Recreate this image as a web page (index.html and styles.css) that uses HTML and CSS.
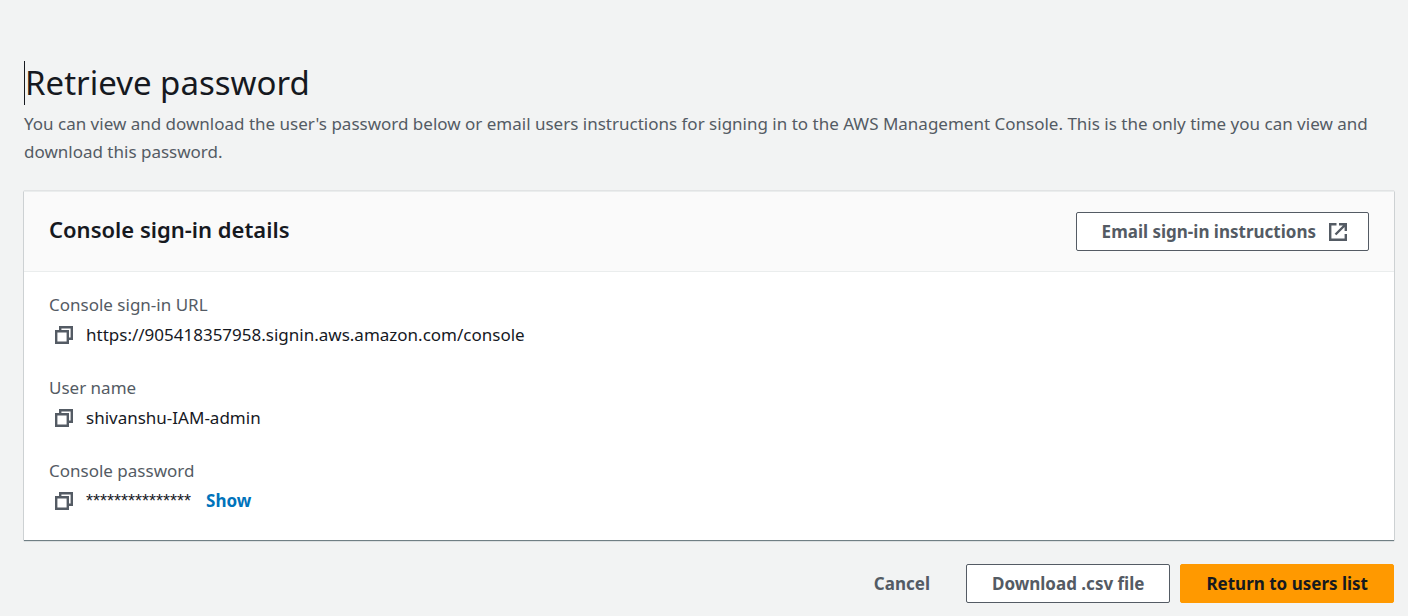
FILE: index.html
```html
<!DOCTYPE html>
<html lang="en">
<head>
<meta charset="utf-8">
<title>Retrieve password</title>
<link rel="stylesheet" href="styles.css">
</head>
<body>
<main class="page">
  <header class="intro">
    <h1 class="title">Retrieve password</h1>
    <p class="lead">You can view and download the user's password below or email users instructions for signing in to the AWS Management Console. This is the only time you can view and download this password.</p>
  </header>
  <section class="card">
    <div class="card-head">
      <h2 class="card-title">Console sign-in details</h2>
      <button class="btn btn-icon" type="button">Email sign-in instructions
        <svg class="icon" viewBox="0 0 20 20" aria-hidden="true"><path d="M8.5 2.2H2.2v15.6h15.6V12M11 2.2h6.8V9M17.5 2.5 7.5 12.5"/></svg>
      </button>
    </div>
    <dl class="details">
      <div class="field">
        <dt class="label">Console sign-in URL</dt>
        <dd class="value"><button class="copy" type="button" aria-label="Copy sign-in URL"><svg class="icon" viewBox="0 0 20 20" aria-hidden="true"><path d="M2.2 6.2h11.6v11.6H2.2zM6.2 5.8V2.2h11.6v11.6h-3.6"/></svg></button><span>https://905418357958.signin.aws.amazon.com/console</span></dd>
      </div>
      <div class="field">
        <dt class="label">User name</dt>
        <dd class="value"><button class="copy" type="button" aria-label="Copy user name"><svg class="icon" viewBox="0 0 20 20" aria-hidden="true"><path d="M2.2 6.2h11.6v11.6H2.2zM6.2 5.8V2.2h11.6v11.6h-3.6"/></svg></button><span>shivanshu-IAM-admin</span></dd>
      </div>
      <div class="field">
        <dt class="label">Console password</dt>
        <dd class="value"><button class="copy" type="button" aria-label="Copy password"><svg class="icon" viewBox="0 0 20 20" aria-hidden="true"><path d="M2.2 6.2h11.6v11.6H2.2zM6.2 5.8V2.2h11.6v11.6h-3.6"/></svg></button><span class="secret">***************</span><button class="show" type="button">Show</button></dd>
      </div>
    </dl>
  </section>
  <footer class="actions">
    <button class="btn btn-link" type="button">Cancel</button>
    <button class="btn" type="button">Download .csv file</button>
    <button class="btn btn-primary" type="button">Return to users list</button>
  </footer>
</main>
</body>
</html>
```
FILE: styles.css
```css
* { box-sizing: border-box; }
body {
  margin: 0;
  background: #f2f3f3;
  color: #16191f;
  font: 17px/28px "Noto Sans", "Open Sans", sans-serif;
}
button { font: inherit; cursor: pointer; }
.page { padding: 61px 14px 12px 24px; }
.intro { padding-right: 24px; margin-bottom: 25px; }
.title {
  margin: 0 0 5px;
  border-left: 1px solid #16191f;
  font-size: 33px;
  line-height: 44px;
  font-weight: 400;
}
.lead { margin: 0; color: #545b64; }
.card {
  background: #fff;
  border-top: 1px solid #eaeded;
  box-shadow: 0 1px 1px rgba(0, 28, 36, .5), 0 0 1px rgba(0, 28, 36, .4);
}
.card-head {
  display: flex;
  justify-content: space-between;
  align-items: flex-start;
  padding: 20px 25px;
  background: #fafafa;
  border-bottom: 1px solid #eaeded;
}
.card-title { margin: 0; font-size: 22px; line-height: 34px; font-weight: 600; }
.btn {
  display: inline-flex;
  align-items: center;
  height: 39px;
  padding: 0 25px;
  border: 1px solid #545b64;
  border-radius: 2px;
  background: #fff;
  color: #545b64;
  font-weight: 700;
}
.btn-icon { gap: 12px; padding-right: 20px; }
.icon {
  width: 20px;
  height: 20px;
  fill: none;
  stroke: #545b64;
  stroke-width: 2.4;
}
.details {
  display: grid;
  gap: 25px;
  margin: 0;
  padding: 19px 25px 25px;
}
.label { color: #545b64; }
.value { display: flex; align-items: center; margin: 2px 0 0; }
.copy { display: flex; width: 37px; padding: 0 0 0 5px; border: 0; background: none; }
.secret { font-family: "Liberation Sans", Arial, sans-serif; font-size: 18px; }
.show { margin-left: 15px; padding: 0; border: 0; background: none; color: #0073bb; font-weight: 700; }
.actions { display: flex; justify-content: flex-end; gap: 10px; margin-top: 24px; }
.btn-link { border-color: transparent; background: transparent; }
.btn-primary { border-color: #ff9900; background: #ff9900; color: #16191f; }
```
